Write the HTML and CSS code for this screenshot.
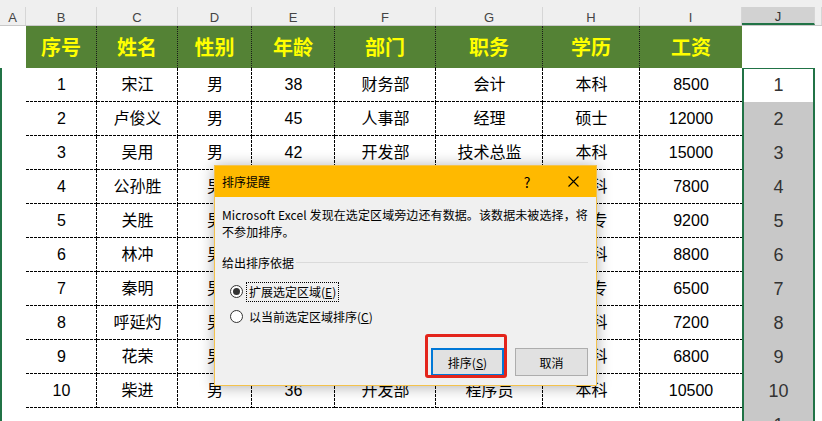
FILE: index.html
```html
<!DOCTYPE html>
<html lang="zh-CN">
<head>
  <meta charset="UTF-8">
  <title>排序提醒</title>
  <link rel="stylesheet" href="styles.css">
</head>
<body>
  <div class="sheet">
    <div class="row colhead">
      <div>A</div><div>B</div><div>C</div><div>D</div><div>E</div><div>F</div><div>G</div><div>H</div><div>I</div><div class="sel">J</div><div></div>
    </div>

    <div class="row title">
      <div class="a"></div>
      <div>序号</div><div>姓名</div><div>性别</div><div>年龄</div><div>部门</div><div>职务</div><div>学历</div><div class="last">工资</div>
      <div class="j"></div><div></div>
    </div>

    <div class="row data">
      <div class="a"></div>
      <div>1</div><div>宋江</div><div>男</div><div>38</div><div>财务部</div><div>会计</div><div>本科</div><div class="last">8500</div>
      <div class="j active">1</div><div></div>
    </div>
    <div class="row data">
      <div class="a"></div>
      <div>2</div><div>卢俊义</div><div>男</div><div>45</div><div>人事部</div><div>经理</div><div>硕士</div><div class="last">12000</div>
      <div class="j">2</div><div></div>
    </div>
    <div class="row data">
      <div class="a"></div>
      <div>3</div><div>吴用</div><div>男</div><div>42</div><div>开发部</div><div>技术总监</div><div>本科</div><div class="last">15000</div>
      <div class="j">3</div><div></div>
    </div>
    <div class="row data">
      <div class="a"></div>
      <div>4</div><div>公孙胜</div><div>男</div><div>40</div><div>开发部</div><div>工程师</div><div>本科</div><div class="last">7800</div>
      <div class="j">4</div><div></div>
    </div>
    <div class="row data">
      <div class="a"></div>
      <div>5</div><div>关胜</div><div>男</div><div>33</div><div>销售部</div><div>专员</div><div>大专</div><div class="last">9200</div>
      <div class="j">5</div><div></div>
    </div>
    <div class="row data">
      <div class="a"></div>
      <div>6</div><div>林冲</div><div>男</div><div>35</div><div>开发部</div><div>工程师</div><div>本科</div><div class="last">8800</div>
      <div class="j">6</div><div></div>
    </div>
    <div class="row data">
      <div class="a"></div>
      <div>7</div><div>秦明</div><div>男</div><div>31</div><div>销售部</div><div>专员</div><div>大专</div><div class="last">6500</div>
      <div class="j">7</div><div></div>
    </div>
    <div class="row data">
      <div class="a"></div>
      <div>8</div><div>呼延灼</div><div>男</div><div>37</div><div>财务部</div><div>出纳</div><div>本科</div><div class="last">7200</div>
      <div class="j">8</div><div></div>
    </div>
    <div class="row data">
      <div class="a"></div>
      <div>9</div><div>花荣</div><div>男</div><div>29</div><div>人事部</div><div>专员</div><div>本科</div><div class="last">6800</div>
      <div class="j">9</div><div></div>
    </div>
    <div class="row data">
      <div class="a"></div>
      <div>10</div><div>柴进</div><div>男</div><div>36</div><div>开发部</div><div>程序员</div><div>本科</div><div class="last">10500</div>
      <div class="j">10</div><div></div>
    </div>
    <div class="row data empty">
      <div class="a"></div>
      <div></div><div></div><div></div><div></div><div></div><div></div><div></div><div></div>
      <div class="j">1</div><div></div>
    </div>
  </div>

  <div class="dialog">
    <div class="dlg-title">
      <span class="dlg-caption">排序提醒</span>
      <span class="dlg-help">?</span>
      <span class="dlg-close">
        <svg width="11" height="11" viewBox="0 0 11 11"><path d="M0.5 0.5 L10.5 10.5 M10.5 0.5 L0.5 10.5" stroke="#000" stroke-width="1.1" fill="none"/></svg>
      </span>
    </div>
    <div class="dlg-body">
      <p class="dlg-msg">Microsoft Excel 发现在选定区域旁边还有数据。该数据未被选择，将<br>不参加排序。</p>
      <div class="group-label"><span>给出排序依据</span></div>
      <div class="radio radio-first">
        <span class="radio-dot checked"></span>
        <span class="radio-text focus">扩展选定区域(<u>E</u>)</span>
      </div>
      <div class="radio">
        <span class="radio-dot"></span>
        <span class="radio-text">以当前选定区域排序(<u>C</u>)</span>
      </div>
      <div class="dlg-buttons">
        <button type="button" class="btn btn-default">排序(<u>S</u>)</button>
        <button type="button" class="btn">取消</button>
      </div>
    </div>
    <div class="highlight"></div>
  </div>
</body>
</html>
```

FILE: styles.css
```css
* {
  box-sizing: border-box;
}

body {
  margin: 0;
  width: 822px;
  height: 421px;
  overflow: hidden;
  position: relative;
  background-color: #fff;
  font-family: "Liberation Sans", "Noto Sans CJK SC", sans-serif;
}

.row {
  display: grid;
  grid-template-columns: 26px 71px 81px 74px 83px 101px 107px 97px 102px 73px 7px;
}

/* column letters */
.colhead {
  height: 26px;
  background-color: #efefef;
  border-bottom: 1px solid #c9c9c9;
}

.colhead > div {
  margin-top: 7px;
  height: 18px;
  padding-top: 2px;
  border-right: 1px solid #d6d6d6;
  font-size: 13px;
  line-height: 18px;
  text-align: center;
  color: #444;
}

.colhead > .sel {
  background-color: #d2d2d2;
  border-bottom: 2px solid #217346;
  color: #333;
  line-height: 16px;
}

/* green header row */
.title {
  height: 42px;
}

.title > div {
  background-color: #548235;
  border-right: 1px dotted #1a1a1a;
  color: #ffff00;
  font-family: "Noto Sans CJK SC", sans-serif;
  font-weight: bold;
  font-size: 20px;
  line-height: 42px;
  text-align: center;
}

.title > .a,
.title > .j,
.title > div:last-child {
  background-color: #fff;
  border-right: none;
}

.title > .last {
  border-right: none;
}

/* data rows: short dashes like Excel's dashed border */
.data {
  height: 34px;
}

.data > div {
  background-image:
    linear-gradient(to right, #000 3px, transparent 3px),
    linear-gradient(to bottom, #000 3px, transparent 3px);
  background-size: 4px 1px, 1px 4px;
  background-repeat: repeat-x, repeat-y;
  background-position: left bottom, right top;
  font-size: 16px;
  line-height: 33px;
  text-align: center;
  color: #000;
}

.data > .last {
  background-image: linear-gradient(to right, #000 3px, transparent 3px);
  background-size: 4px 1px;
  background-repeat: repeat-x;
  background-position: left bottom;
}

.data > .a {
  background-image: none;
  border-left: 2px solid #217346;
}

.data > div:last-child,
.empty > div {
  background-image: none;
}

.data > .j {
  background-image: none;
  border-left: 2px solid #217346;
  border-right: 2px solid #217346;
  background-color: #c8c8c8;
  color: #333;
  font-size: 18px;
  line-height: 34px;
}

.data > .j.active {
  background-color: #fff;
  border-top: 1px solid #217346;
  line-height: 33px;
}

/* dialog */
.dialog {
  position: absolute;
  left: 214px;
  top: 165px;
  width: 383px;
  height: 221px;
  background-color: #f0f0f0;
  border: 1px solid #f3c24c;
  box-shadow: 0 1px 14px rgba(0, 0, 0, 0.32);
  font-family: "Noto Sans CJK SC", sans-serif;
  font-size: 12px;
  color: #000;
}

.dlg-title {
  height: 31px;
  background-color: #ffb900;
  display: flex;
  align-items: center;
}

.dlg-caption {
  flex: 1;
  padding-left: 7px;
}

.dlg-help,
.dlg-close {
  width: 46px;
  text-align: center;
}

.dlg-help {
  font-size: 14px;
}

.dlg-close svg {
  display: block;
  margin: 0 auto;
}

.dlg-body {
  padding: 9px 8px 0 7px;
}

.dlg-msg {
  margin: 0;
  line-height: 17px;
  white-space: nowrap;
  letter-spacing: 0.1px;
}

.group-label {
  margin-top: 14px;
  display: flex;
  align-items: center;
  line-height: 17px;
}

.group-label:after {
  content: '';
  flex: 1;
  height: 1px;
  margin-left: 2px;
  background-color: #dadada;
}

.radio {
  display: flex;
  align-items: center;
  height: 25px;
}

.radio-first {
  margin-top: 8px;
}

.radio-dot {
  width: 13px;
  height: 13px;
  margin-left: 8px;
  border: 1px solid #333;
  border-radius: 50%;
  background-color: #fff;
  display: flex;
  align-items: center;
  justify-content: center;
}

.radio-dot.checked:after {
  content: '';
  width: 7px;
  height: 7px;
  border-radius: 50%;
  background-color: #333;
}

.radio-text {
  margin-left: 3px;
  padding: 0 2px;
  border: 1px solid transparent;
  line-height: 18px;
}

.radio-text.focus {
  border: 1px dotted #000;
}

.dlg-buttons {
  display: flex;
  justify-content: flex-end;
  gap: 11px;
  margin-top: 19px;
}

.btn {
  width: 73px;
  height: 28px;
  padding: 0;
  background-color: #e1e1e1;
  border: 1px solid #adadad;
  font-family: "Noto Sans CJK SC", sans-serif;
  font-size: 12px;
  color: #000;
}

.btn-default {
  border: 2px solid #0078d7;
}

.highlight {
  position: absolute;
  left: 210px;
  top: 168px;
  width: 82px;
  height: 44px;
  border: 3px solid #e3241b;
  border-radius: 3px;
}
```
